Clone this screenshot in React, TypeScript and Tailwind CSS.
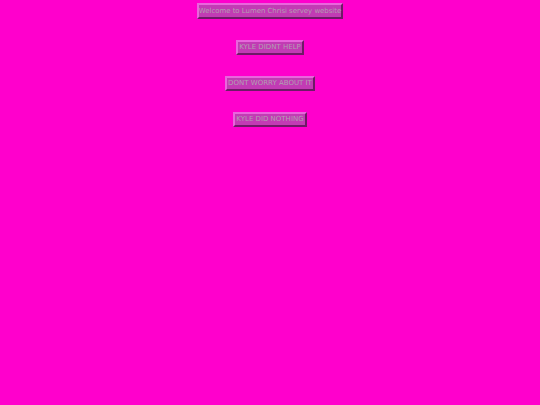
export default function App() {
  const items = ['KYLE DIDNT HELP', 'DONT WORRY ABOUT IT', 'KYLE DID NOTHING'];

  return (
    <div className="min-h-[405px] w-full bg-[#ff00cc] flex flex-col items-center pt-[3px] font-['DejaVu_Sans',Verdana,sans-serif]">
      <div className="border-2 border-t-[#e866dc] border-l-[#e866dc] border-b-[#6e1a66] border-r-[#6e1a66] bg-[#c23bb4] px-0 h-[16px] flex items-center text-[7px] leading-none text-[#b0a0b0] tracking-[-0.05px]">
        Welcome to Lumen Chrisi servey website
      </div>
      <div className="flex flex-col items-center gap-[21px] mt-[21px]">
        {items.map((t) => (
          <div
            key={t}
            className="border-2 border-t-[#e866dc] border-l-[#e866dc] border-b-[#6e1a66] border-r-[#6e1a66] bg-[#c23bb4] px-[1px] h-[15px] flex items-center text-[7px] leading-none text-[#b0a0b0]"
          >
            {t}
          </div>
        ))}
      </div>
    </div>
  );
}
